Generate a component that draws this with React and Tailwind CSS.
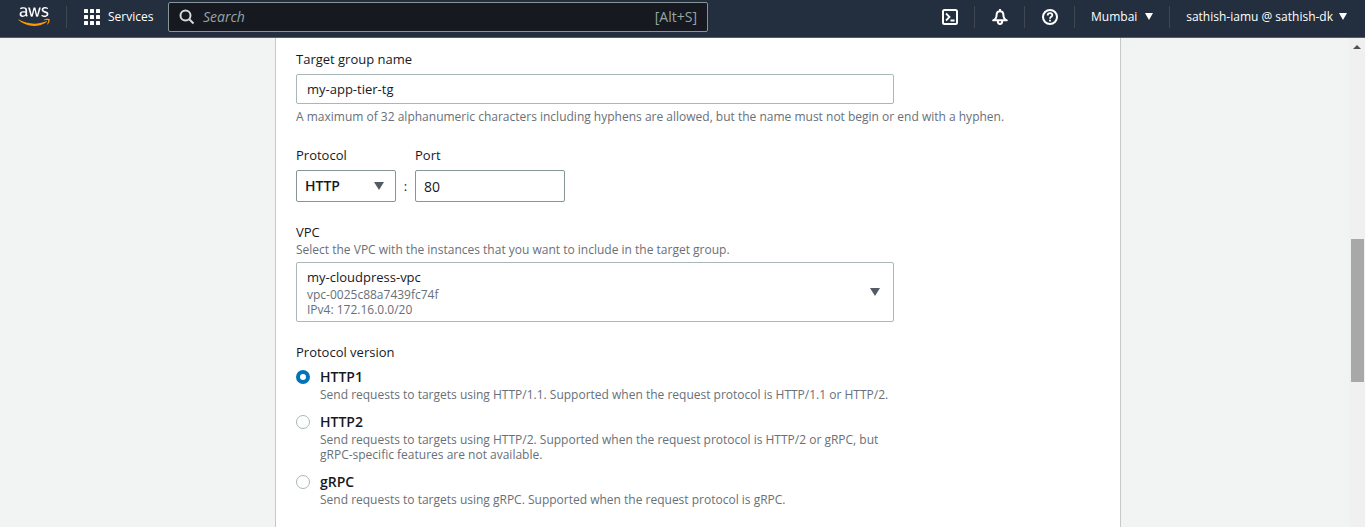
import React from "react";

function Caret({ className = "" }) {
  return (
    <svg viewBox="0 0 10 8" preserveAspectRatio="none" aria-hidden="true" className={`shrink-0 ${className}`}>
      <path d="M0 0h10L5 8z" fill="currentColor" />
    </svg>
  );
}

function Divider() {
  return <span className="h-[22px] w-px shrink-0 bg-[#414750]" />;
}

function AwsLogo() {
  return (
    <svg viewBox="0 0 304 182" className="h-[19px] w-8" aria-hidden="true">
      <path
        fill="#fff"
        d="M86.4 66.4c0 3.7.4 6.7 1.1 8.9.8 2.2 1.8 4.6 3.2 7.2.5.8.7 1.6.7 2.3 0 1-.6 2-1.9 3l-6.3 4.2c-.9.6-1.8.9-2.6.9-1 0-2-.5-3-1.4-1.4-1.5-2.6-3.1-3.6-4.7-1-1.7-2-3.6-3.1-5.9-7.8 9.2-17.6 13.8-29.4 13.8-8.4 0-15.1-2.4-20-7.2-4.9-4.8-7.4-11.2-7.4-19.2 0-8.5 3-15.4 9.1-20.6 6.1-5.2 14.2-7.8 24.5-7.8 3.4 0 6.9.3 10.6.8 3.7.5 7.5 1.3 11.5 2.2v-7.3c0-7.6-1.6-12.9-4.7-16-3.2-3.1-8.6-4.6-16.3-4.6-3.5 0-7.1.4-10.8 1.3-3.7.9-7.3 2-10.8 3.4-1.6.7-2.8 1.1-3.5 1.3-.7.2-1.2.3-1.6.3-1.4 0-2.1-1-2.1-3.1v-4.9c0-1.6.2-2.8.7-3.5.5-.7 1.4-1.4 2.8-2.1 3.5-1.8 7.7-3.3 12.6-4.5C41 1.9 46.200 1.300 51.700 1.300c11.900 0 20.600 2.700 26.200 8.100 5.500 5.400 8.300 13.600 8.300 24.600v32.400zM45.800 81.600c3.300 0 6.700-.6 10.300-1.800 3.600-1.200 6.800-3.400 9.500-6.400 1.600-1.900 2.800-4 3.400-6.400.6-2.400 1-5.300 1-8.700v-4.200c-2.900-.7-6-1.300-9.200-1.700-3.200-.4-6.300-.6-9.400-.6-6.700 0-11.600 1.300-14.900 4-3.300 2.700-4.900 6.500-4.900 11.500 0 4.700 1.200 8.200 3.700 10.600 2.400 2.500 5.900 3.700 10.500 3.700zM126.100 92.400c-1.800 0-3-.3-3.800-1-.8-.6-1.500-2-2.100-3.900L96.700 10.200c-.6-2-.9-3.300-.9-4 0-1.600.8-2.500 2.400-2.500h9.800c1.900 0 3.200.3 3.900 1 .8.6 1.400 2 2 3.900l16.800 66.200 15.600-66.200c.5-2 1.100-3.300 1.900-3.900.8-.6 2.200-1 4-1h8c1.900 0 3.200.3 4 1 .8.6 1.500 2 1.900 3.900l15.800 67 17.300-67c.6-2 1.300-3.300 2-3.900.8-.6 2.100-1 3.900-1h9.300c1.600 0 2.500.8 2.500 2.500 0 .5-.1 1-.2 1.600-.1.600-.3 1.400-.7 2.500l-24.100 77.300c-.6 2-1.300 3.300-2.100 3.900-.8.600-2.100 1-3.800 1h-8.600c-1.900 0-3.200-.3-4-1-.8-.7-1.500-2-1.900-4L156 23l-15.400 64.400c-.5 2-1.100 3.300-1.900 4-.8.700-2.200 1-4 1zM254.600 95.100c-5.200 0-10.400-.6-15.400-1.800-5-1.200-8.900-2.500-11.500-4-1.600-.9-2.700-1.900-3.100-2.800-.4-.9-.6-1.900-.6-2.800v-5.100c0-2.100.8-3.100 2.300-3.100.6 0 1.200.1 1.800.3.600.2 1.500.6 2.500 1 3.400 1.500 7.100 2.700 11 3.500 4 .8 7.900 1.200 11.900 1.200 6.300 0 11.200-1.100 14.600-3.300 3.400-2.200 5.200-5.400 5.200-9.500 0-2.800-.9-5.100-2.700-7-1.800-1.900-5.200-3.600-10.100-5.200L246 52c-7.300-2.300-12.700-5.700-16-10.200-3.300-4.400-5-9.300-5-14.500 0-4.200.9-7.900 2.700-11.100 1.800-3.200 4.200-6 7.200-8.200 3-2.300 6.400-4 10.400-5.200 4-1.200 8.200-1.700 12.600-1.700 2.200 0 4.500.1 6.700.4 2.300.3 4.400.7 6.500 1.100 2 .5 3.900 1 5.700 1.600 1.800.6 3.200 1.200 4.200 1.800 1.400.8 2.400 1.600 3 2.500.6.800.9 1.900.9 3.300v4.700c0 2.100-.8 3.200-2.300 3.200-.8 0-2.100-.4-3.800-1.200-5.700-2.600-12.100-3.900-19.200-3.900-5.700 0-10.200.9-13.300 2.800-3.100 1.900-4.700 4.800-4.700 8.900 0 2.800 1 5.200 3 7.100 2 1.900 5.700 3.800 11 5.500l14.200 4.500c7.200 2.300 12.400 5.500 15.500 9.600 3.100 4.100 4.600 8.800 4.600 14 0 4.300-.9 8.200-2.600 11.600-1.800 3.400-4.200 6.400-7.300 8.800-3.100 2.500-6.800 4.300-11.100 5.600-4.500 1.400-9.200 2.100-14.300 2.100z"
      />
      <path
        fill="#ff9900"
        d="M273.500 143.700c-32.900 24.300-80.700 37.200-121.800 37.200-57.600 0-109.500-21.300-148.700-56.700-3.100-2.800-.3-6.600 3.400-4.400 42.400 24.600 94.700 39.500 148.800 39.500 36.500 0 76.600-7.600 113.500-23.200 5.500-2.500 10.200 3.600 4.800 7.600zM287.200 128.100c-4.200-5.400-27.800-2.600-38.500-1.300-3.200.4-3.700-2.400-.8-4.500 18.800-13.200 49.700-9.400 53.300-5 3.600 4.500-1 35.400-18.600 50.200-2.700 2.300-5.300 1.100-4.100-1.900 4-9.900 12.900-32.200 8.700-37.500z"
      />
    </svg>
  );
}

function GridIcon() {
  return (
    <svg viewBox="0 0 16 16" className="h-4 w-4 shrink-0" fill="#fff" aria-hidden="true">
      {[0, 6, 12].map((y) =>
        [0, 6, 12].map((x) => <rect key={`${x}-${y}`} x={x} y={y} width="4" height="4" rx="0.6" />)
      )}
    </svg>
  );
}

function Header() {
  return (
    <header className="flex h-[38px] items-center border-b border-[#545b64] bg-[#232f3e] pb-1 text-xs text-white">
      <a href="#home" aria-label="AWS home" className="ml-[18px] flex w-12 shrink-0">
        <AwsLogo />
      </a>
      <Divider />
      <button className="ml-[17px] flex w-[84px] shrink-0 items-center gap-2">
        <GridIcon />
        Services
      </button>
      <label className="flex h-[30px] w-[540px] items-center rounded-xs border border-[#879596] bg-[#16191f] px-2.5">
        <svg viewBox="0 0 16 16" className="h-4 w-4 shrink-0" fill="none" stroke="#d5dbdb" strokeWidth="2" aria-hidden="true">
          <circle cx="6.500" cy="6.500" r="5" />
          <path d="M10 10l4.500 4.500" />
        </svg>
        <input
          type="search"
          aria-label="Search"
          placeholder="Search"
          className="ml-2 min-w-0 flex-1 bg-transparent text-sm italic outline-none placeholder:text-[#95a5a6]"
        />
        <span className="text-sm text-[#95a5a6]">[Alt+S]</span>
      </label>
      <div className="ml-auto flex shrink-0 items-center">
        <button aria-label="CloudShell" className="flex w-[49px] justify-center">
          <svg viewBox="0 0 16 16" className="h-4 w-4" fill="none" stroke="#fff" strokeWidth="2" aria-hidden="true">
            <rect x="1" y="1" width="14" height="14" rx="1.500" />
            <path d="M4 4.500L7.500 8 4 11.500M8.500 11.500h4" strokeWidth="1.800" />
          </svg>
        </button>
        <Divider />
        <button aria-label="Notifications" className="flex w-[49px] justify-center">
          <svg viewBox="0 0 16 16" className="h-4 w-4" fill="none" stroke="#fff" strokeWidth="2" strokeLinejoin="round" aria-hidden="true">
            <path d="M8 0v2M8 2.200C5.800 2.200 4.600 4 4.600 6c0 2.800-.9 4.200-3.400 5.300h13.600C12.300 10.200 11.400 8.800 11.400 6c0-2-1.200-3.800-3.400-3.800z" />
            <path d="M5.800 12c0 1.900.9 3 2.200 3s2.200-1.100 2.200-3" />
          </svg>
        </button>
        <Divider />
        <button aria-label="Help" className="flex w-[49px] justify-center">
          <svg viewBox="0 0 16 16" className="h-4 w-4" fill="none" stroke="#fff" strokeWidth="2" aria-hidden="true">
            <circle cx="8" cy="8" r="7" />
            <path d="M5.700 6.400C5.700 5 6.600 4.200 8 4.200s2.300.8 2.300 2c0 1.700-2.300 1.600-2.300 3.500M8 10.800v1.700" strokeWidth="1.800" />
          </svg>
        </button>
        <Divider />
        <button className="flex w-[94px] items-center justify-center gap-2">
          Mumbai
          <Caret className="h-[7px] w-2" />
        </button>
        <Divider />
        <button className="ml-4 mr-[18px] flex items-center gap-1.5 whitespace-nowrap">
          sathish-iamu @ sathish-dk
          <Caret className="h-[7px] w-2" />
        </button>
      </div>
    </header>
  );
}

const versions = [
  {
    id: "http1",
    name: "HTTP1",
    text: "Send requests to targets using HTTP/1.1. Supported when the request protocol is HTTP/1.1 or HTTP/2.",
  },
  {
    id: "http2",
    name: "HTTP2",
    text: "Send requests to targets using HTTP/2. Supported when the request protocol is HTTP/2 or gRPC, but gRPC-specific features are not available.",
  },
  {
    id: "grpc",
    name: "gRPC",
    text: "Send requests to targets using gRPC. Supported when the request protocol is gRPC.",
  },
];

function TargetGroupForm() {
  return (
    <form className="flex-1 border-x border-[#c4caca] bg-white px-5 pt-[11px] pb-5 text-[13px]/5 text-[#16191f]">
      <label htmlFor="name" className="block">Target group name</label>
      <input
        id="name"
        defaultValue="my-app-tier-tg"
        className="mt-[5px] block h-[30px] w-full max-w-[598px] rounded-xs border border-[#aab7b8] px-2.5 outline-none"
      />
      <p className="mt-[5px] text-xs/[15px] text-[#687078]">
        A maximum of 32 alphanumeric characters including hyphens are allowed, but the name must not begin or end with a hyphen.
      </p>

      <div className="mt-[21px] flex items-end">
        <div className="w-[100px]">
          <label htmlFor="protocol" className="block">Protocol</label>
          <div className="mt-[5px] grid items-center">
            <select
              id="protocol"
              className="col-start-1 row-start-1 h-8 w-full appearance-none rounded-xs border border-[#879596] bg-white px-2 text-sm font-semibold outline-none"
            >
              <option>HTTP</option>
              <option>HTTPS</option>
            </select>
            <Caret className="pointer-events-none col-start-1 row-start-1 mr-3 h-2 w-2.5 justify-self-end text-[#545b64]" />
          </div>
        </div>
        <span className="w-[19px] pb-1.5 text-center">:</span>
        <div className="w-[150px]">
          <label htmlFor="port" className="block">Port</label>
          <input
            id="port"
            defaultValue="80"
            className="mt-[5px] block h-8 w-full rounded-xs border border-[#879596] px-2 text-sm outline-none"
          />
        </div>
      </div>

      <div className="mt-5 max-w-[598px]">
        <span id="vpc-label" className="block">VPC</span>
        <p className="text-xs/[15px] text-[#687078]">
          Select the VPC with the instances that you want to include in the target group.
        </p>
        <button
          type="button"
          aria-labelledby="vpc-label"
          aria-haspopup="listbox"
          className="mt-[5px] flex w-full items-center justify-between rounded-xs border border-[#aab7b8] py-1 pr-[13px] pl-2.5 text-left"
        >
          <span>
            <span className="block">my-cloudpress-vpc</span>
            <span className="block text-xs/[15px] text-[#687078]">vpc-0025c88a7439fc74f</span>
            <span className="block text-xs/[15px] text-[#687078]">IPv4: 172.16.0.0/20</span>
          </span>
          <Caret className="h-2 w-2.5 text-[#545b64]" />
        </button>
      </div>

      <fieldset className="mt-5 max-w-[598px]">
        <legend>Protocol version</legend>
        <div className="mt-[5px] flex flex-col gap-2.5">
          {versions.map((v, i) => (
            <div key={v.id} className="flex gap-2.5">
              <input
                type="radio"
                name="version"
                id={v.id}
                defaultChecked={i === 0}
                aria-describedby={`${v.id}-text`}
                className="mt-[3px] h-3.5 w-3.5 shrink-0 appearance-none rounded-full border border-[#aab7b8] bg-white checked:border-4 checked:border-[#0073bb]"
              />
              <div>
                <label htmlFor={v.id} className="block text-sm/5 font-semibold">{v.name}</label>
                <p id={`${v.id}-text`} className="text-xs/[15px] text-[#687078]">{v.text}</p>
              </div>
            </div>
          ))}
        </div>
      </fieldset>
    </form>
  );
}

function ScrollTrack() {
  return (
    <div aria-hidden="true" className="flex w-4 shrink-0 flex-col items-center bg-[#f0f0f0] pt-[7px]">
      <svg viewBox="0 0 8 4" className="h-1 w-2">
        <path d="M0 4l4-4 4 4z" fill="#505050" />
      </svg>
      <div className="mt-[190px] h-[143px] w-[13px] bg-[#a8a8a8]" />
    </div>
  );
}

export default function App() {
  return (
    <div className="flex min-h-screen flex-col bg-[#f2f3f3] font-['Open_Sans','Noto_Sans',sans-serif]">
      <Header />
      <div className="flex flex-1">
        <main className="flex flex-1 pr-[228px] pl-[275px]">
          <TargetGroupForm />
        </main>
        <ScrollTrack />
      </div>
    </div>
  );
}
